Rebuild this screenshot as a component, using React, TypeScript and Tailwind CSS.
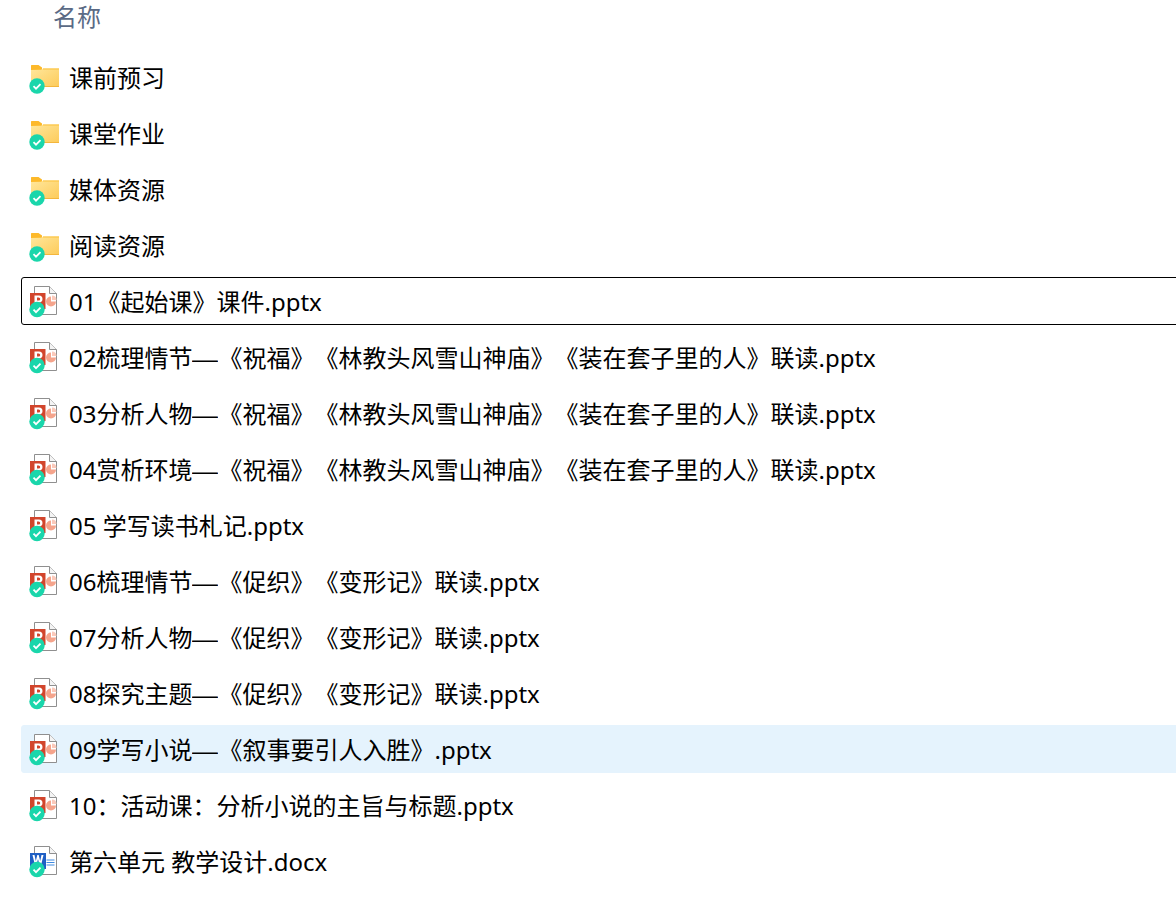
const folders = ['课前预习', '课堂作业', '媒体资源', '阅读资源'];

const files = [
  { name: '01《起始课》课件.pptx', state: 'focused' },
  { name: '02梳理情节—《祝福》《林教头风雪山神庙》《装在套子里的人》联读.pptx' },
  { name: '03分析人物—《祝福》《林教头风雪山神庙》《装在套子里的人》联读.pptx' },
  { name: '04赏析环境—《祝福》《林教头风雪山神庙》《装在套子里的人》联读.pptx' },
  { name: '05 学写读书札记.pptx' },
  { name: '06梳理情节—《促织》《变形记》联读.pptx' },
  { name: '07分析人物—《促织》《变形记》联读.pptx' },
  { name: '08探究主题—《促织》《变形记》联读.pptx' },
  { name: '09学写小说—《叙事要引人入胜》.pptx', state: 'selected' },
  { name: '10：活动课：分析小说的主旨与标题.pptx' },
  { name: '第六单元 教学设计.docx', word: true },
];

function SyncBadge({ cx, cy }: { cx: number; cy: number }) {
  return (
    <g>
      <circle cx={cx} cy={cy} r="7.7" fill="#1ad6ab" />
      <path
        d={`M${cx - 3.5} ${cy + 0.2}l2.5 2.5l4.500 -4.500`}
        fill="none"
        stroke="#ffffff"
        strokeWidth="1.800"
      />
    </g>
  );
}

function FolderIcon() {
  return (
    <svg width="32" height="34" viewBox="0 0 32 34" className="shrink-0 mt-[2px]">
      <defs>
        <linearGradient id="folderBody" x1="0" y1="0" x2="1" y2="1">
          <stop offset="0" stopColor="#ffe79c" />
          <stop offset="1" stopColor="#fdcb5a" />
        </linearGradient>
      </defs>
      <path d="M2 4.500a0.500 0.500 0 0 1 0.500 -0.500h7l3.500 2.500v3h-11z" fill="#fdb92a" />
      <path d="M2 9l10 -0.200l2 -1.300h16v18.500h-28z" fill="url(#folderBody)" />
      <rect x="2" y="25" width="28" height="1" fill="#f4b63c" />
      <rect x="14" y="7.500" width="16" height="1" fill="#fcc23c" />
      <SyncBadge cx={8} cy={25} />
    </svg>
  );
}

function PptIcon() {
  return (
    <svg width="32" height="34" viewBox="0 0 32 34" className="shrink-0 mt-[2px]">
      <path d="M5.500 1.500h15l7 7v21h-22z" fill="#ffffff" stroke="#8f8f8f" />
      <path d="M20.500 1.500v7h7" fill="#f4f4f4" stroke="#8f8f8f" />
      <rect x="1" y="8" width="15.500" height="16" fill="#d2452c" />
      <path d="M5.500 10.500h4.500a3.500 3.500 0 0 1 0 7h-2v3.500h-2.500zM8 12.500v3h1.700a1.500 1.500 0 0 0 0 -3z" fill="#ffffff" fillRule="evenodd" />
      <path d="M22 11.500a5 5 0 1 0 5 5h-5z" fill="#f5a48c" />
      <path d="M23 10.500a4.700 4.700 0 0 1 4.500 4.500h-4.500z" fill="#fbc9ba" />
      <SyncBadge cx={8} cy={24.5} />
    </svg>
  );
}

function WordIcon() {
  return (
    <svg width="32" height="34" viewBox="0 0 32 34" className="shrink-0 mt-[2px]">
      <path d="M5.500 1.500h15l7 7v21h-22z" fill="#ffffff" stroke="#8f8f8f" />
      <path d="M20.500 1.500v7h7" fill="#f4f4f4" stroke="#8f8f8f" />
      <rect x="1" y="8" width="16" height="16" fill="#1f5fc4" />
      <path d="M3.500 10h2l1.300 6l1.500 -6h1.400l1.500 6l1.300 -6h2l-2.300 9.500h-1.800l-1.400 -5.500l-1.400 5.500h-1.800z" fill="#ffffff" />
      <path d="M17.500 15h8M17.500 17.500h8M17.500 20h8" stroke="#3f8ae0" strokeWidth="1" />
      <SyncBadge cx={8} cy={24.5} />
    </svg>
  );
}

function Row({ icon, name, state }: { icon: React.ReactNode; name: string; state?: string }) {
  let tone = 'border-transparent';
  if (state === 'focused') tone = 'border-black rounded-[3px]';
  if (state === 'selected') tone = 'border-[#e5f3fd] bg-[#e5f3fd] rounded-[3px]';
  const parts = name.split('—');
  return (
    <div className={`flex items-center gap-2 h-12 w-[1170px] shrink-0 pl-[7px] border ${tone}`}>
      {icon}
      <span className="whitespace-nowrap text-black pt-[2px] [text-spacing-trim:space-all]">
        {parts[0]}
        {parts.length > 1 && (
          <>
            <span className="inline-block w-[26px] origin-left scale-x-[1.08] font-['Liberation_Sans']">—</span>
            {parts[1]}
          </>
        )}
      </span>
    </div>
  );
}

export default function App() {
  return (
    <div
      className="h-[898px] overflow-hidden bg-white text-[24px] pl-[21px]"
      style={{ fontFamily: '"Noto Sans", "Noto Sans CJK SC", sans-serif' }}
    >
      <div className="h-[34px] mb-[19px] pl-8 flex items-center text-[#5a6a85]">名称</div>
      <div className="flex flex-col gap-2">
        {folders.map((name) => (
          <Row key={name} icon={<FolderIcon />} name={name} />
        ))}
        {files.map((file) => (
          <Row
            key={file.name}
            icon={file.word ? <WordIcon /> : <PptIcon />}
            name={file.name}
            state={file.state}
          />
        ))}
      </div>
    </div>
  );
}
